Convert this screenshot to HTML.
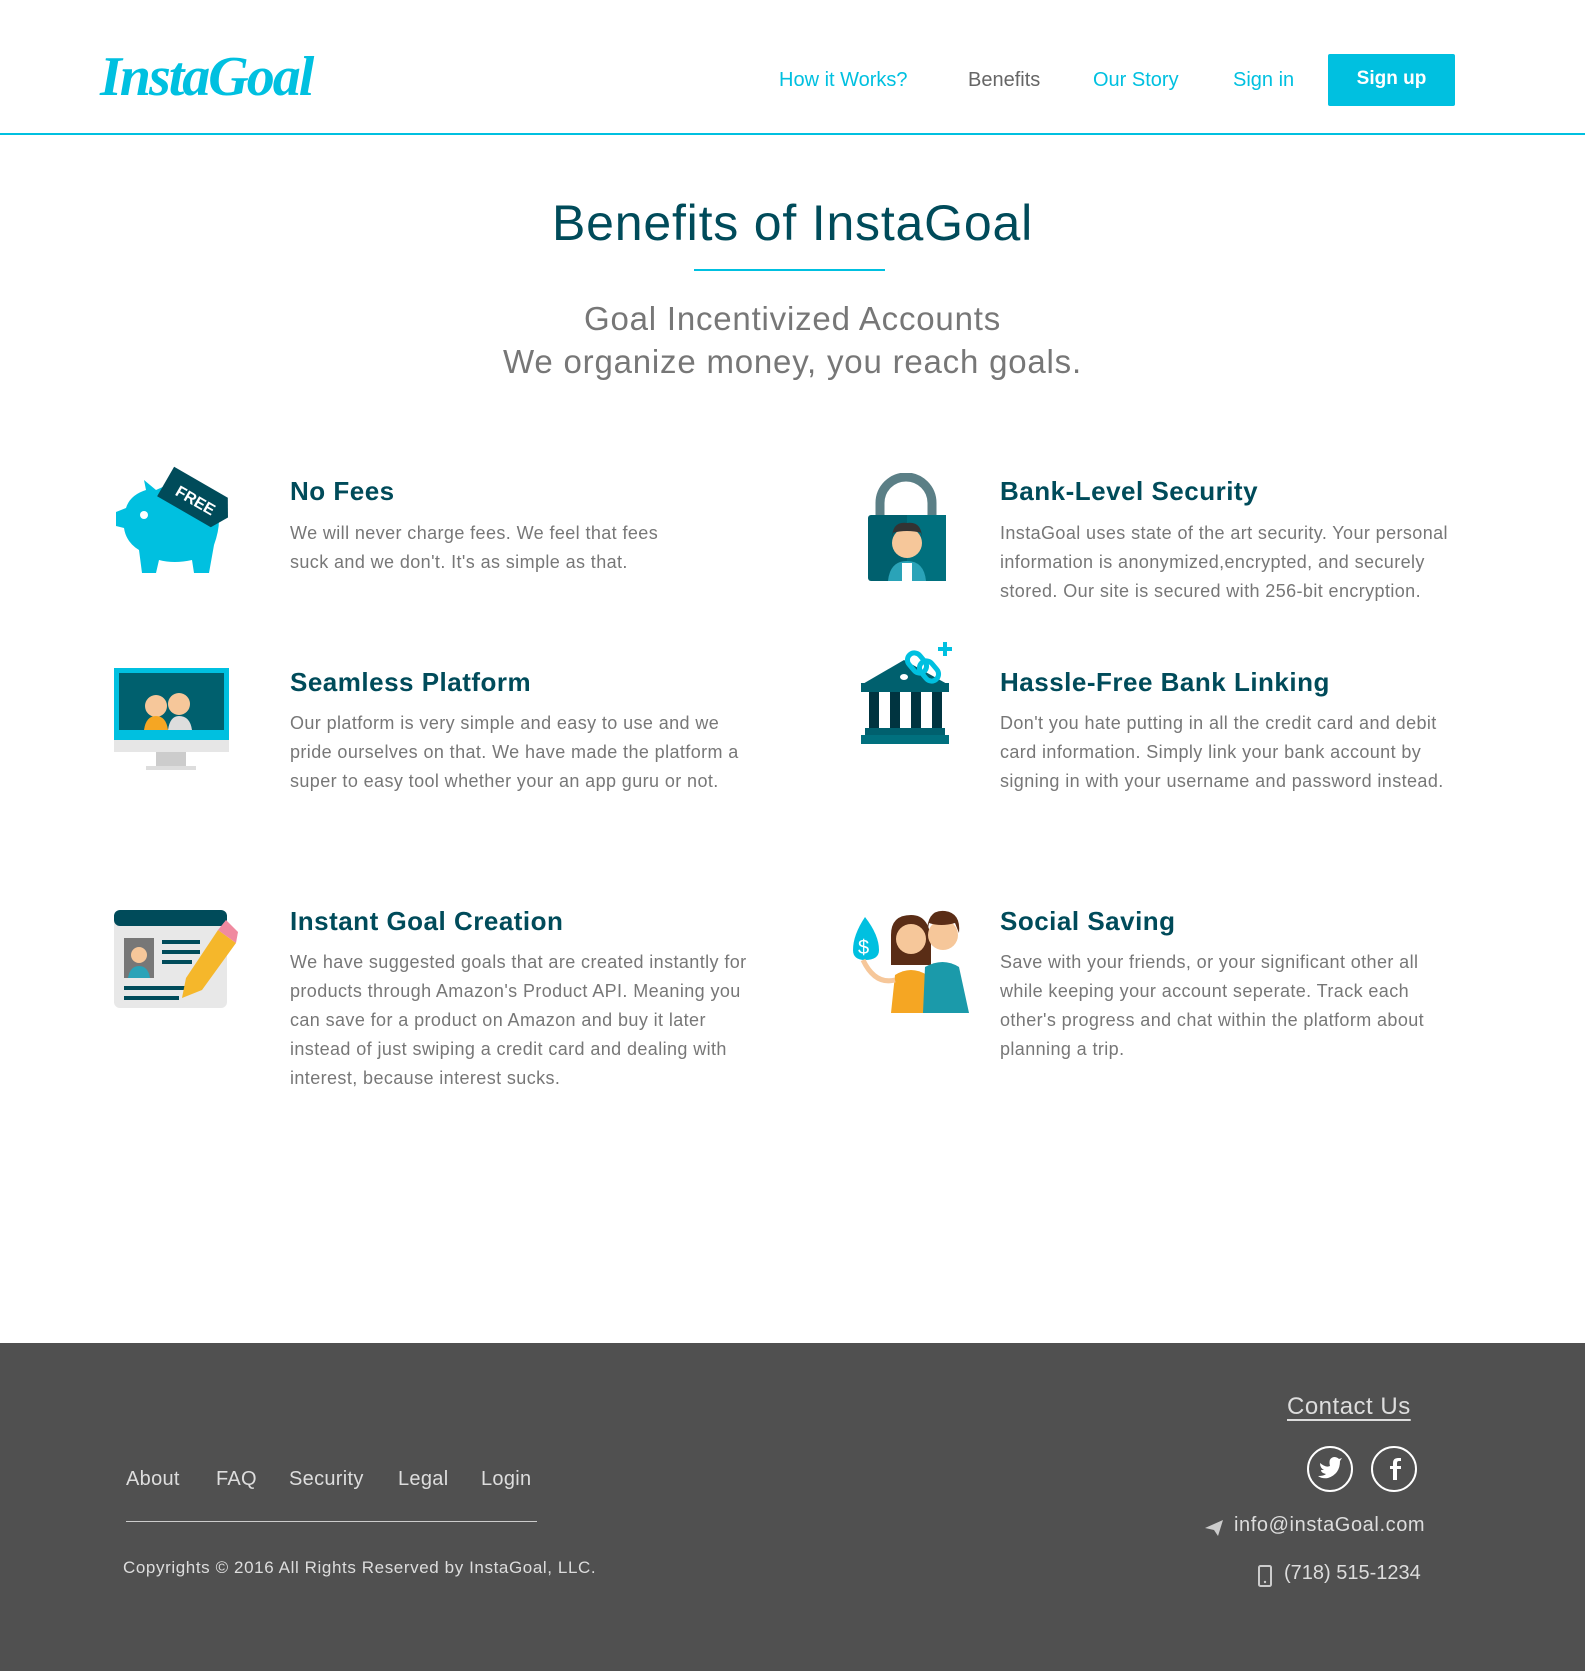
<!DOCTYPE html>
<html><head><meta charset="utf-8"><style>
*{margin:0;padding:0;box-sizing:border-box}
body{width:1585px;height:1671px;position:relative;background:#fff;font-family:"Liberation Sans",sans-serif;overflow:hidden}
.a{position:absolute;white-space:nowrap}
.nav{font-size:20px;top:69px}
.cy{color:#00c0e0}
h3{position:absolute;font-size:26px;color:#004b5a;font-weight:bold;white-space:nowrap;letter-spacing:0.5px}
.p{position:absolute;font-size:18px;line-height:29px;color:#777;white-space:nowrap;letter-spacing:0.4px}
footer{position:absolute;left:0;top:1343px;width:1585px;height:328px;background:#505050}
.fl{position:absolute;color:#ddd;font-size:20px;top:125px;letter-spacing:0.3px}
</style></head><body>
<div class="a" style="left:100px;top:45px;font-family:'Liberation Serif',serif;font-style:italic;font-weight:bold;font-size:56px;color:#00c0e0;letter-spacing:-2px">InstaGoal</div>
<div class="a nav cy" style="left:779px">How it Works?</div>
<div class="a nav" style="left:968px;color:#666">Benefits</div>
<div class="a nav cy" style="left:1093px">Our Story</div>
<div class="a nav cy" style="left:1233px">Sign in</div>
<div class="a" style="left:1328px;top:54px;width:127px;height:52px;background:#00c0e0;color:#fff;font-weight:bold;font-size:19px;text-align:center;line-height:50px;border-radius:2px">Sign up</div>
<div class="a" style="left:0;top:133px;width:1585px;height:2px;background:#00c0e0"></div>

<div class="a" style="left:0;width:1585px;text-align:center;top:194px;font-size:50px;color:#004b5a;letter-spacing:0.8px">Benefits of InstaGoal</div>
<div class="a" style="left:694px;top:269px;width:191px;height:2px;background:#00c0e0"></div>
<div class="a" style="left:0;width:1585px;text-align:center;top:297px;font-size:33px;color:#777;line-height:43px;letter-spacing:0.8px">Goal Incentivized Accounts<br>We organize money, you reach goals.</div>

<!-- icons -->
<svg class="a" style="left:114px;top:450px" width="130" height="130" viewBox="0 0 130 130">
<path d="M30 30 L42 40 Q70 25 95 45 Q112 62 100 95 L95 123 L80 123 L78 110 Q60 114 45 110 L42 123 L28 123 L25 100 Q12 92 10 78 L2 76 L2 62 L12 58 Q16 45 32 40Z" fill="#00c0e0"/>
<circle cx="30" cy="65" r="4" fill="#fff"/>
<g transform="rotate(30 75 45)"><path d="M48 28 L110 28 L120 45 L110 62 L48 62Z" fill="#004b5a"/><text x="62" y="52" font-size="16" font-weight="bold" fill="#fff" font-family="Liberation Sans">FREE</text></g>
</svg>
<svg class="a" style="left:866px;top:473px" width="80" height="110" viewBox="0 0 80 110">
<path d="M14 42 V30 a26 26 0 0 1 52 0 V42" fill="none" stroke="#5b7f86" stroke-width="9"/>
<rect x="2" y="42" width="78" height="66" rx="3" fill="#00606e"/>
<rect x="41" y="42" width="39" height="66" fill="#00707e"/>
<circle cx="41" cy="70" r="15" fill="#f6c79a"/><path d="M26 66 Q26 48 41 50 Q56 48 56 66 L56 60 Q41 56 26 60Z" fill="#333"/>
<path d="M22 108 Q24 88 41 88 Q58 88 60 108Z" fill="#2aa3b8"/><rect x="36" y="90" width="10" height="18" fill="#fff"/>
</svg>
<svg class="a" style="left:114px;top:668px" width="116" height="108" viewBox="0 0 116 108">
<rect x="0" y="0" width="115" height="72" fill="#00c0e0"/><rect x="5" y="5" width="105" height="57" fill="#00606e"/>
<rect x="0" y="72" width="115" height="12" fill="#e6e6e6"/><rect x="42" y="84" width="30" height="14" fill="#ccc"/><rect x="32" y="98" width="50" height="4" fill="#ddd"/>
<circle cx="42" cy="38" r="11" fill="#f6c79a"/><circle cx="65" cy="36" r="11" fill="#f6c79a"/><path d="M30 62 Q32 48 42 48 Q52 48 54 62Z" fill="#f5a623"/><path d="M54 62 Q56 48 65 48 Q76 48 78 62Z" fill="#ddd"/>
</svg>
<svg class="a" style="left:861px;top:640px" width="95" height="115" viewBox="0 0 95 115">
<path d="M43 20 L88 45 L0 45Z" fill="#00606e"/><rect x="0" y="43" width="88" height="9" fill="#00606e"/>
<rect x="8" y="52" width="10" height="36" fill="#003440"/><rect x="29" y="52" width="10" height="36" fill="#003440"/><rect x="50" y="52" width="10" height="36" fill="#003440"/><rect x="71" y="52" width="10" height="36" fill="#003440"/>
<rect x="4" y="88" width="80" height="7" fill="#00606e"/><rect x="0" y="95" width="88" height="9" fill="#00707e"/>
<ellipse cx="43" cy="37" rx="4" ry="3" fill="#fff"/>
<g fill="none" stroke="#00c0e0" stroke-width="5"><rect x="49" y="12" width="14" height="22" rx="7" transform="rotate(-40 56 23)"/><rect x="61" y="20" width="14" height="22" rx="7" transform="rotate(-40 68 31)"/></g>
<path d="M84 2 V16 M77 9 H91" stroke="#00c0e0" stroke-width="4"/>
</svg>
<svg class="a" style="left:114px;top:910px" width="125" height="100" viewBox="0 0 125 100">
<rect x="0" y="2" width="113" height="96" rx="6" fill="#e8e8e8"/><rect x="0" y="0" width="113" height="16" rx="6" fill="#004b5a"/>
<rect x="10" y="28" width="30" height="40" fill="#777"/><circle cx="25" cy="45" r="8" fill="#f6c79a"/><path d="M14 68 Q16 56 25 56 Q34 56 36 68Z" fill="#2aa3b8"/>
<rect x="48" y="30" width="38" height="4" fill="#004b5a"/><rect x="48" y="40" width="38" height="4" fill="#004b5a"/><rect x="48" y="50" width="30" height="4" fill="#004b5a"/>
<rect x="10" y="76" width="65" height="4" fill="#004b5a"/><rect x="10" y="86" width="55" height="4" fill="#004b5a"/>
<path d="M104 20 L122 33 L88 80 L68 88 L72 68Z" fill="#f5b72b"/><path d="M104 20 L112 10 L124 22 L122 33Z" fill="#f08aa0"/>
</svg>
<svg class="a" style="left:845px;top:905px" width="130" height="108" viewBox="0 0 130 108">
<path d="M20 12 Q8 30 8 45 Q8 55 20 55 Q34 55 34 45 Q34 30 20 12Z" fill="#00c0e0"/><text x="13" y="49" font-size="20" fill="#fff" font-family="Liberation Sans">$</text>
<path d="M46 30 Q46 10 66 10 Q86 10 86 40 L86 60 L46 60Z" fill="#5a2d16"/><circle cx="66" cy="34" r="15" fill="#f6c79a"/>
<path d="M46 108 L50 70 Q66 60 82 70 L86 108Z" fill="#f5a623"/><path d="M18 55 Q30 80 50 75" stroke="#f6c79a" stroke-width="5" fill="none"/>
<path d="M78 108 L80 62 Q98 52 114 62 L124 108Z" fill="#1b9aaa"/><circle cx="98" cy="30" r="15" fill="#f6c79a"/><path d="M82 28 Q82 4 100 6 Q116 8 114 28 L110 18 Q96 22 84 18Z" fill="#5a2d16"/>
</svg>

<h3 style="left:290px;top:476px">No Fees</h3>
<div class="p" style="left:290px;top:519px">We will never charge fees. We feel that fees<br>suck and we don't. It's as simple as that.</div>
<h3 style="left:1000px;top:476px">Bank-Level Security</h3>
<div class="p" style="left:1000px;top:519px">InstaGoal uses state of the art security. Your personal<br>information is anonymized,encrypted, and securely<br>stored. Our site is secured with 256-bit encryption.</div>
<h3 style="left:290px;top:667px">Seamless Platform</h3>
<div class="p" style="left:290px;top:709px">Our platform is very simple and easy to use and we<br>pride ourselves on that. We have made the platform a<br>super to easy tool whether your an app guru or not.</div>
<h3 style="left:1000px;top:667px">Hassle-Free Bank Linking</h3>
<div class="p" style="left:1000px;top:709px">Don't you hate putting in all the credit card and debit<br>card information. Simply link your bank account by<br>signing in with your username and password instead.</div>
<h3 style="left:290px;top:906px">Instant Goal Creation</h3>
<div class="p" style="left:290px;top:948px">We have suggested goals that are created instantly for<br>products through Amazon's Product API. Meaning you<br>can save for a product on Amazon and buy it later<br>instead of just swiping a credit card and dealing with<br>interest, because interest sucks.</div>
<h3 style="left:1000px;top:906px">Social Saving</h3>
<div class="p" style="left:1000px;top:948px">Save with your friends, or your significant other all<br>while keeping your account seperate. Track each<br>other's progress and chat within the platform about<br>planning a trip.</div>

<footer>
<div class="fl" style="left:126px">About</div>
<div class="fl" style="left:216px">FAQ</div>
<div class="fl" style="left:289px">Security</div>
<div class="fl" style="left:398px">Legal</div>
<div class="fl" style="left:481px">Login</div>
<div class="a" style="left:126px;top:178px;width:411px;height:1px;background:#ccc"></div>
<div class="a" style="left:123px;top:215px;font-size:17px;color:#ddd;letter-spacing:0.6px">Copyrights © 2016 All Rights Reserved by InstaGoal, LLC.</div>
<div class="a" style="left:1287px;top:50px;font-size:24px;color:#ddd;text-decoration:underline;text-underline-offset:5px;letter-spacing:0.5px">Contact Us</div>
<svg class="a" style="left:1306px;top:101px" width="112" height="50" viewBox="0 0 112 50">
<circle cx="24" cy="25" r="22" fill="none" stroke="#fff" stroke-width="2"/><circle cx="88" cy="25" r="22" fill="none" stroke="#fff" stroke-width="2"/>
<path d="M14 19 Q20 24 24 22 Q22 14 28 13 Q31 13 33 15 L36 14 L34 17 Q34 30 22 34 Q16 35 12 32 Q18 32 20 30 Q15 29 15 26 Q17 26 18 26 Q14 24 14 19Z" fill="#fff"/>
<path d="M91 36 V25 H95 V22 H91 V19 Q91 17 93 17 H95 V14 H92 Q87 14 87 19 V22 H84 V25 H87 V36Z" fill="#fff"/>
</svg>
<svg class="a" style="left:1203px;top:175px" width="22" height="20" viewBox="0 0 22 20"><path d="M2 10 L20 2 L15 18 L11 12Z" fill="#ccc"/></svg>
<div class="a" style="left:1234px;top:171px;font-size:20px;color:#ddd;letter-spacing:0.6px">info@instaGoal.com</div>
<svg class="a" style="left:1258px;top:222px" width="14" height="22" viewBox="0 0 14 22"><rect x="1" y="1" width="12" height="20" rx="1.5" fill="none" stroke="#ccc" stroke-width="2"/><circle cx="7" cy="17" r="1.2" fill="#ccc"/></svg>
<div class="a" style="left:1284px;top:219px;font-size:20px;color:#ddd">(718) 515-1234</div>
</footer>
</body></html>
